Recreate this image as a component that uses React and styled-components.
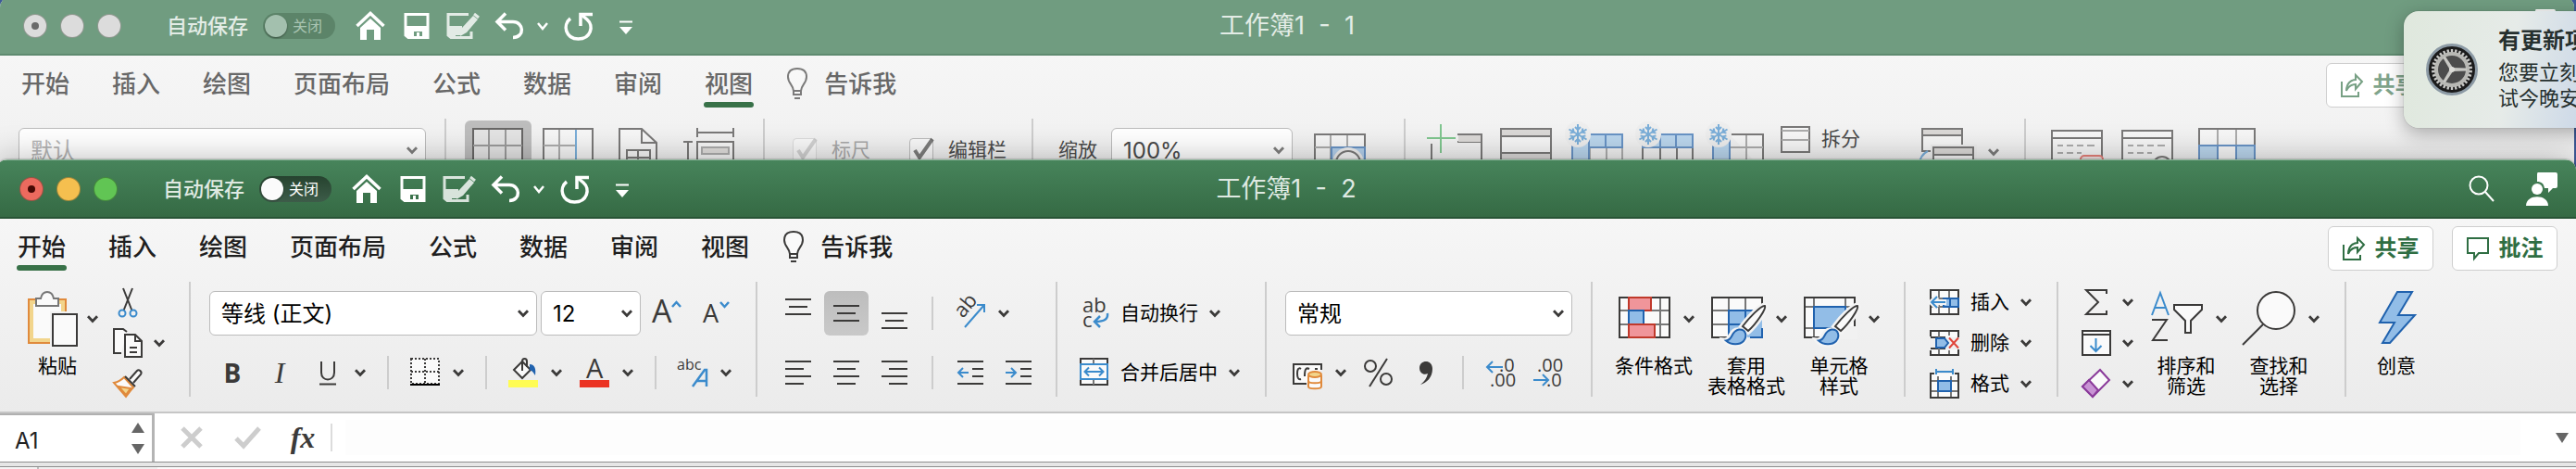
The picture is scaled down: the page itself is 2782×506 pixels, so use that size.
import React from "react";
import styled, { createGlobalStyle, css } from "styled-components";

const INK = "#3b3a39";
const GREEN = "#2f6e43";
const BLUE = "#3b8bcc";
const DEEP = "#2062ae";
const SKY = "#92bde7";

const GlobalStyle = createGlobalStyle`
  * { box-sizing: border-box; }
  html, body, #root { height: 100%; }
  body {
    margin: 0;
    overflow: hidden;
    font-family: "Inter", "Noto Sans CJK SC", sans-serif;
    color: #000;
  }
  button, input, select { font: inherit; color: inherit; }
`;

/* ---------- windows ---------- */

const Desktop = styled.div`
  position: relative;
  height: 100%;
  overflow: hidden;
  background: #3d5a98;
`;

const Window = styled.section`
  position: absolute;
  top: ${(p) => (p.$front ? "172px" : "-4px")};
  left: ${(p) => (p.$front ? "-4px" : "0")};
  right: ${(p) => (p.$front ? "0" : "2px")};
  bottom: 0;
  display: flex;
  flex-direction: column;
  overflow: hidden;
  border-radius: 12px 12px 0 0;
  background: linear-gradient(#f6f6f6 64px, #efefef 200px, #ebebeb 272px);
  ${(p) =>
    p.$front
      ? css`box-shadow: 0 0 2px rgba(0, 0, 0, 0.5), 0 0 36px rgba(0, 0, 0, 0.28);`
      : css`--dim: 0.65;`}
`;

const TitleBar = styled.header`
  display: grid;
  grid-template-columns: 1fr auto 1fr;
  align-items: center;
  height: 64px;
  flex: none;
  padding: 0 20px;
  border-top: 1px solid ${(p) => (p.$front ? "#8fb79c" : "#709c80")};
  border-bottom: 2px solid ${(p) => (p.$front ? "#285436" : "#5f8b70")};
  background: ${(p) => (p.$front ? "linear-gradient(#47845b, #356a44)" : "#709c80")};
  color: ${(p) => (p.$front ? "#dfe9e2" : "#e3ece6")};
`;

const TitleSide = styled.div`
  display: flex;
  align-items: center;
  justify-content: ${(p) => (p.$end ? "flex-end" : "flex-start")};
  gap: ${(p) => (p.$end ? "32px" : "18px")};
`;

const Title = styled.h1`
  margin: 0;
  font-size: 27px;
  font-weight: 400;
  line-height: 36px;
  white-space: pre;
`;

const Lights = styled.div`
  display: flex;
  gap: 14px;
  margin: 0 31px 0 5px;
`;

const Light = styled.button`
  display: grid;
  place-items: center;
  width: 26px;
  height: 26px;
  padding: 0;
  border: 1px solid rgba(30, 50, 30, 0.4);
  border-radius: 50%;
  background: ${(p) => p.$color};
  &::after {
    content: "";
    width: 8px;
    height: 8px;
    border-radius: 50%;
    background: ${(p) => p.$dot || "transparent"};
  }
`;

const AutoSave = styled.label`
  display: flex;
  align-items: center;
  gap: 16px;
  margin-right: 4px;
  font-size: 22px;
  font-weight: 500;
  line-height: 32px;
`;

const Track = styled.span`
  display: flex;
  align-items: center;
  gap: 6px;
  width: 78px;
  height: 28px;
  padding: 0 2px;
  border-radius: 14px;
  background: ${(p) => (p.$front ? "linear-gradient(#26432f, #3d5c49)" : "#5c8469")};
  color: ${(p) => (p.$front ? "#fff" : "#a9c4b2")};
  font-size: 16px;
  font-weight: 400;
`;

const Knob = styled.input`
  appearance: none;
  width: 24px;
  height: 24px;
  margin: 0;
  border-radius: 50%;
  background: ${(p) => (p.$front ? "#fbfbfb" : "#a3c0ae")};
  box-shadow: 0 1px 2px rgba(0, 0, 0, 0.4);
`;

const Plain = styled.button`
  display: flex;
  align-items: center;
  justify-content: center;
  gap: 14px;
  padding: 0;
  border: 0;
  background: none;
  white-space: nowrap;
`;

const Svg = styled.svg`
  display: block;
  flex: none;
  overflow: visible;
  fill: none;
  stroke: ${INK};
  stroke-width: 2;
  opacity: var(--dim, 1);
  text { stroke: none; fill: ${INK}; font-family: "Open Sans", "Noto Sans", sans-serif; }
`;

const TitleSvg = styled(Svg)`
  stroke: #fff;
  opacity: ${(p) => (p.$faded ? 0.8 : 1)};
`;

/* ---------- tabs ---------- */

const TabRow = styled.nav`
  display: flex;
  align-items: center;
  justify-content: space-between;
  flex: none;
  padding: 8px 20px 12px 22px;
`;

const Tabs = styled.div`
  display: flex;
  gap: 44px;
`;

const Tab = styled.button`
  display: flex;
  flex-direction: column;
  padding: 4px 0 0;
  border: 0;
  background: none;
  color: ${(p) => (p.$front ? "#1f1f1f" : "#686868")};
  font-size: 26px;
  font-weight: 500;
  line-height: 38px;
  white-space: nowrap;
  span { padding: 0 1px; }
  &::after {
    content: "";
    width: 100%;
    height: 6px;
    border-radius: 3px;
    background: ${(p) => (p.$active ? "#387148" : "transparent")};
  }
`;

const TellMe = styled(Tab)`
  flex-direction: row;
  gap: 16px;
  margin-left: -9px;
  &::after { content: none; }
`;

const Actions = styled.div`
  display: flex;
  gap: 20px;
`;

const Action = styled.button`
  display: flex;
  align-items: center;
  justify-content: center;
  gap: 11px;
  width: 114px;
  height: 48px;
  padding: 0;
  border: 1px solid #cfcfcf;
  border-radius: 6px;
  background: #fff;
  color: ${(p) => (p.$front ? GREEN : "#7fa48b")};
  font-size: 24px;
  font-weight: 700;
  line-height: 32px;
`;

/* ---------- ribbon ---------- */

const Ribbon = styled.div`
  display: flex;
  flex: none;
  height: 142px;
  border-bottom: 2px solid #c6c6c6;
`;

const Group = styled.div`
  display: flex;
  flex: none;
  gap: ${(p) => p.$gap || 0}px;
  padding: 0 ${(p) => p.$right}px 0 ${(p) => p.$left}px;
`;

const Divider = styled.div`
  flex: none;
  width: 2px;
  height: 124px;
  background: #cdcdcd;
`;

const MiniDivider = styled.div`
  width: 2px;
  height: 36px;
  margin: 0 ${(p) => p.$space}px;
  background: #cdcdcd;
`;

const TwoRows = styled.div`
  display: grid;
  grid-template-rows: 48px 36px;
  row-gap: 22px;
  align-content: start;
  padding-top: 10px;
`;

const ThreeRows = styled.div`
  display: flex;
  flex-direction: column;
  gap: 12px;
  padding-top: 6px;
`;

const Row = styled.div`
  display: flex;
  align-items: center;
  gap: ${(p) => p.$gap}px;
  padding-left: ${(p) => p.$left || 0}px;
`;

const Item = styled(Plain)`
  gap: ${(p) => p.$gap || 14}px;
  height: 32px;
  color: ${(p) => p.$ink || "inherit"};
  font-size: 21px;
  line-height: 32px;
`;

const AlignButton = styled(Plain)`
  width: 48px;
  height: ${(p) => (p.$short ? "36px" : "48px")};
  border-radius: 6px;
  background: ${(p) => (p.$active ? "linear-gradient(#bdbdbd, #c9c9c9)" : "none")};
`;

const Big = styled.button`
  display: flex;
  flex-direction: column;
  align-items: center;
  gap: 10px;
  width: 100px;
  padding: 10px 0 0;
  border: 0;
  background: none;
  font-size: 21px;
  line-height: 22px;
  white-space: pre;
`;

const BigIcon = styled.span`
  display: flex;
  align-items: center;
  gap: 10px;
`;

const BigLabel = styled.span`
  padding-right: ${(p) => (p.$split ? "6px" : "0")};
`;

const ViewButton = styled(Plain)`
  align-items: flex-start;
  width: 72px;
  height: 72px;
  margin-top: 2px;
  padding-top: 4px;
  border-radius: 6px;
  background: ${(p) => (p.$active ? "#bdbdbd" : "none")};
`;

const ViewMenuButton = styled(Plain)`
  height: 60px;
  margin: 6px 0 0 60px;
`;

const SelectBox = styled.div`
  position: relative;
  width: ${(p) => p.$width}px;
  height: 48px;
  select {
    appearance: none;
    width: 100%;
    height: 100%;
    padding: 0 12px;
    border: 1px solid #bcbcbc;
    border-radius: 6px;
    background: #fff;
    color: ${(p) => p.$ink || "#000"};
    font-size: 24px;
    opacity: 1;
  }
  svg {
    position: absolute;
    right: 9px;
    top: 20px;
    pointer-events: none;
  }
`;

const Label = styled.label`
  display: flex;
  align-items: center;
  gap: 16px;
  height: 48px;
  color: ${(p) => (p.$off ? "#a8a8a8" : "#4a4a4a")};
  font-size: 21px;
  line-height: 32px;
  white-space: nowrap;
`;

const Check = styled.span`
  position: relative;
  width: 26px;
  height: 26px;
  input {
    appearance: none;
    display: block;
    width: 26px;
    height: 26px;
    margin: 0;
    border: 1px solid ${(p) => (p.$off ? "#dcdcdc" : "#bdbdbd")};
    border-radius: 4px;
    background: #f8f8f8;
  }
  svg {
    position: absolute;
    left: 0;
    top: 0;
    pointer-events: none;
  }
`;

const Glyph = styled.span`
  width: 32px;
  color: ${INK};
  font-family: ${(p) => (p.$serif ? '"Liberation Serif", serif' : '"Open Sans", sans-serif')};
  font-size: ${(p) => (p.$serif ? "32px" : "28px")};
  font-weight: ${(p) => (p.$bold ? 700 : 400)};
  font-style: ${(p) => (p.$serif ? "italic" : "normal")};
  line-height: 32px;
  text-align: center;
`;

/* ---------- formula bar ---------- */

const FormulaBar = styled.div`
  display: flex;
  align-items: center;
  flex: none;
  height: 52px;
  background: #fff;
`;

const NameBox = styled.div`
  display: flex;
  align-items: center;
  align-self: stretch;
  width: 171px;
  padding: 0 8px 0 20px;
  border-top: 2px solid #b0b0b0;
  border-right: 3px solid #b4b4b4;
  margin-right: 24px;
  input {
    flex: 1;
    min-width: 0;
    padding: 6px 0 0;
    border: 0;
    background: none;
    color: #222;
    font-size: 24px;
    line-height: 32px;
  }
`;

const Stepper = styled.div`
  display: flex;
  flex-direction: column;
  gap: 12px;
`;

const FormulaTools = styled.div`
  display: flex;
  align-items: center;
  gap: 28px;
`;

const FormulaInput = styled.input`
  flex: 1;
  min-width: 0;
  height: 38px;
  border: 0;
  background: #fdfdfd;
  font-size: 24px;
`;

const FormulaDivider = styled.div`
  width: 2px;
  height: 30px;
  margin: 0 14px;
  background: #dcdcdc;
`;

const Expand = styled(Plain)`
  width: 60px;
  justify-content: flex-end;
  padding-right: 8px;
`;

const Sash = styled.div`
  flex: none;
  height: 6px;
  border-top: 1px solid #8f8f8f;
  border-bottom: 1px solid #8f8f8f;
  background: #e6e6e6;
`;

const Sheet = styled.div`
  flex: 1;
  background: linear-gradient(90deg, #f4f4f4 44px, #bdbdbd 44px 46px, #efefef 46px 174px, #fafafa 174px);
`;

/* ---------- notification ---------- */

const Notice = styled.aside`
  position: absolute;
  top: 12px;
  right: -40px;
  display: flex;
  align-items: center;
  gap: 22px;
  width: 226px;
  height: 126px;
  padding-left: 24px;
  border-radius: 16px;
  background: linear-gradient(100deg, #dfe8dd 0%, #e6ebe8 50%, #cdd9e8 85%);
  box-shadow: 0 0 1px rgba(0, 0, 0, 0.5), 0 6px 20px rgba(0, 0, 0, 0.3);
  color: #26302f;
  white-space: nowrap;
`;

const NoticeText = styled.div`
  padding-bottom: 2px;
  font-size: 22px;
  line-height: 28px;
  p { margin: 0; }
  h2 {
    margin: 0 0 5px;
    font-size: 24px;
    font-weight: 700;
    line-height: 30px;
  }
`;

/* ---------- drawings ---------- */

const Ico = ({ w = 32, h = 32, children }) => (
  <Svg width={w} height={h} viewBox={`0 0 ${w} ${h}`} aria-hidden="true">{children}</Svg>
);

const Caret = () => (
  <Svg width="12" height="8" viewBox="0 0 12 8" aria-hidden="true">
    <path d="M1 1.2 6 6.4 11 1.2" strokeWidth="2.8" />
  </Svg>
);

const Lines = ({ rows }) => (
  <Ico>
    {rows.map(([x1, x2, y]) => <path key={y} d={`M${x1} ${y}H${x2}`} />)}
  </Ico>
);

const brush = (
  <>
    <path d="M58 16C60 19 48 36 40 43L34 38C40 30 54 15 58 16Z" stroke="#f4f4f4" strokeWidth="7" />
    <path d="M14 53C22 54 20 40 31 42C40 45 38 56 28 58C21 59 17 57 14 53Z" stroke="#f4f4f4" strokeWidth="5" />
    <path d="M58 16C60 19 48 36 40 43L34 38C40 30 54 15 58 16Z" fill="#fafafa" />
    <path d="M16 53.5C24 53 21 43 30 41.500C38 41 39 49 35 54C31 58 22 59 16 53.500Z" fill={SKY} stroke={DEEP} />
  </>
);

const icons = {
  paste: (
    <Ico w={60} h={60}>
      <rect x="7" y="9" width="40" height="47" fill="#fafafa" stroke="#e08a3c" />
      <rect x="10" y="12" width="34" height="41" stroke="#f2d58c" strokeWidth="4" />
      <path d="M15 16V8H20C21 3 24 1 27 1S33 3 34 8H39V16Z" fill="#fafafa" stroke="#777" />
      <rect x="30" y="22" width="32" height="40" fill="#f2f2f2" stroke="none" />
      <rect x="33" y="25" width="26" height="34" fill="#fafafa" />
    </Ico>
  ),
  cut: (
    <Ico>
      <path d="M11 1 20.500 25M21 1 11.500 25" />
      <circle cx="10" cy="28" r="3.500" stroke={BLUE} /><circle cx="22" cy="28" r="3.500" stroke={BLUE} />
    </Ico>
  ),
  copy: (
    <Ico>
      <path d="M9 27H1V1H11L15 4" fill="#fafafa" />
      <path d="M13 7H24L31 14V31H13Z" fill="#fafafa" /><path d="M24 7V14H31M18 21H26M18 26H26" />
    </Ico>
  ),
  brush: (
    <Ico>
      <path d="M1 15C6 14 9 12 12 9L22 20C19 23 17 26 14 30Z" fill="#fafafa" stroke="#e08a3c" />
      <path d="M6 19 19 21 14 28Z" fill="#f2d58c" stroke="#e08a3c" />
      <path d="M13 8 24 19M18 11 26 2C28 0 32 3 30 6L22 15" fill="#fafafa" />
    </Ico>
  ),
  grow: (
    <Ico>
      <text x="-2" y="26" fontSize="34">A</text>
      <path d="M20 9 24.500 4 29 9" stroke={BLUE} strokeWidth="2.500" />
    </Ico>
  ),
  shrink: (
    <Ico>
      <text x="1" y="26" fontSize="27">A</text>
      <path d="M20 4 24.500 9 29 4" stroke={BLUE} strokeWidth="2.500" />
    </Ico>
  ),
  border: (
    <Ico>
      <path d="M1 1H31V28H1ZM1 15H31M16 1V28" strokeDasharray="2 2" fill="#fafafa" />
      <path d="M0 29H32" stroke="#000" />
    </Ico>
  ),
  fill: (
    <Ico>
      <path d="M6 13 15 4 24 13 15 22Z" fill="#fafafa" />
      <path d="M15 14V4C15 0 20 0 20 4V10" />
      <path d="M23 7C29 7 30 13 29 19C27 16 26 14 23 13Z" fill={DEEP} stroke="none" />
      <rect y="24" width="32" height="8" fill="#fffc54" stroke="none" />
    </Ico>
  ),
  color: (
    <Ico>
      <text x="7" y="22" fontSize="29">A</text>
      <rect y="24" width="32" height="8" fill="#eb3323" stroke="none" />
    </Ico>
  ),
  phonetic: (
    <Ico>
      <text x="-1" y="13" fontSize="16">abc</text>
      <path d="M16 31 29 13H31V31M20 25H31" stroke={BLUE} strokeWidth="2.500" />
    </Ico>
  ),
  orient: (
    <Ico>
      <text x="0" y="0" fontSize="22" transform="translate(8 22) rotate(-50)">ab</text>
      <path d="M10 31 31 7M23 7H31V15" stroke={BLUE} />
    </Ico>
  ),
  outdent: (
    <Ico>
      <path d="M2 4H30M18 12H30M18 20H30M2 28H30" />
      <path d="M14 16H3M8 11 3 16 8 21" stroke={BLUE} />
    </Ico>
  ),
  indent: (
    <Ico>
      <path d="M2 4H30M18 12H30M18 20H30M2 28H30" />
      <path d="M2 16H13M8 11 13 16 8 21" stroke={BLUE} />
    </Ico>
  ),
  wrap: (
    <Ico>
      <text x="3" y="15" fontSize="22">ab</text>
      <text x="3" y="31" fontSize="22">c</text>
      <path d="M30 16C31 22 27 25 17 25M22 19 16 25 22 31" stroke={BLUE} strokeWidth="2.500" />
    </Ico>
  ),
  merge: (
    <Ico>
      <rect x="1" y="1" width="29" height="28" fill="#fafafa" /><path d="M15 1V7M15 23V29" stroke="#777" />
      <rect x="1" y="7" width="29" height="16" fill="#fafafa" stroke={BLUE} />
      <path d="M6 15H25M10 10.500 5.500 15 10 19.500M21 10.500 25.500 15 21 19.500" stroke={BLUE} />
    </Ico>
  ),
  currency: (
    <Ico>
      <path d="M31 13V7H1V28H15" fill="#fafafa" />
      <path d="M9 12C6 10 5 13 5 17S6 24 9 23M18 12C14 10 13 13 13 20M24 12H27" />
      <path d="M17 19V31C17 34 31 34 31 31V19" fill="#fafafa" stroke="#e08a3c" />
      <ellipse cx="24" cy="18" rx="7" ry="3" fill="#f2d58c" stroke="#e08a3c" />
      <path d="M17 25C17 28 31 28 31 25" stroke="#e08a3c" />
    </Ico>
  ),
  percent: (
    <Ico>
      <circle cx="7" cy="9" r="6" /><circle cx="24" cy="23" r="6" /><path d="M25 1 6 31" />
    </Ico>
  ),
  comma: (
    <Ico>
      <path d="M10 29C17 27 23 21 23 12C23 1 9 2 9 11C9 17 14 19 18 17C17 22 14 26 10 29Z" fill={INK} stroke="none" />
    </Ico>
  ),
  moreDec: (
    <Ico>
      <text x="15" y="15" fontSize="20">.0</text><text x="5" y="31" fontSize="20">.00</text>
      <path d="M19 10H2M8 4 2 10 8 16" stroke={BLUE} />
    </Ico>
  ),
  lessDec: (
    <Ico>
      <text x="5" y="15" fontSize="20">.00</text><text x="15" y="31" fontSize="20">.0</text>
      <path d="M1 24H16M11 18 17 24 11 30" stroke={BLUE} />
    </Ico>
  ),
  conditional: (
    <Ico w={60} h={60}>
      <rect x="1" y="7" width="54" height="43" fill="#fafafa" />
      <path d="M2 21H54M2 36H54M45 8V49" stroke="#777" />
      <rect x="11" y="7" width="24" height="14" fill="#f0959a" stroke="#c0392b" />
      <rect x="11" y="21" width="16" height="15" fill={SKY} stroke={DEEP} />
      <rect x="11" y="36" width="28" height="14" fill="#f0959a" stroke="#c0392b" />
    </Ico>
  ),
  tableFormat: (
    <Ico w={60} h={60}>
      <path d="M1 7H55V50H1Z" fill="#fafafa" stroke="none" />
      <path d="M19 21H55V50H19Z" fill={SKY} stroke="none" />
      <path d="M55 20V7H1V50H19" /><path d="M19 8V21M37 8V21M2 21H19M2 36H19" stroke="#777" />
      <path d="M55 40V50H42M48 21H19V50M37 21V30M19 36H34" stroke={DEEP} />
      {brush}
    </Ico>
  ),
  cellStyle: (
    <Ico w={60} h={60}>
      <path d="M1 7H55V50H1Z" fill="#fafafa" />
      <path d="M11 8V49M45 8V49M2 17H54M2 40H54" stroke="#777" />
      <rect x="11" y="17" width="34" height="23" fill={SKY} stroke={DEEP} />
      <rect x="39" y="38" width="19" height="14" fill="#f1f1f1" stroke="none" />
      {brush}
    </Ico>
  ),
  insertCells: (
    <Ico>
      <rect x="1" y="3" width="30" height="26" fill="#fafafa" />
      <path d="M10 4V28M21 4V28M2 12H30M2 21H30" stroke="#777" />
      <path d="M15 12H31V21H15Z" fill={SKY} stroke={DEEP} /><path d="M22 12V21" stroke={DEEP} />
      <path d="M18 16H2M8 10 2 16 8 22" stroke="#f4f4f4" strokeWidth="6" />
      <path d="M17 16H2M8 10 2 16 8 22" stroke={BLUE} />
    </Ico>
  ),
  deleteCells: (
    <Ico>
      <path d="M1 9V3H31V10M1 24V29H31V23M1 10H17M1 22H17" fill="#fafafa" />
      <path d="M10 4V10M21 4V8M10 22V28M21 24V28" stroke="#777" />
      <path d="M7 11H16L20 16 16 21H7Z" fill={SKY} stroke={DEEP} />
      <path d="M21 10.500 31 21.500M31 10.500 21 21.500" stroke="#e0453a" />
    </Ico>
  ),
  formatCells: (
    <Ico>
      <path d="M5 5H1V31H31V5H27" fill="#fafafa" />
      <path d="M9 8V30M23 8V30M2 13H30M2 24H30" stroke="#777" />
      <rect x="9" y="13" width="14" height="11" fill={SKY} stroke={DEEP} />
      <path d="M7 3H25M7 0V6M25 0V6" stroke={BLUE} />
    </Ico>
  ),
  sum: (<Ico><path d="M27 7V3H5L18 16 5 29H27V25" /></Ico>),
  fillDown: (
    <Ico>
      <path d="M1 3H31V29H1ZM1 7H31" fill="#fafafa" />
      <path d="M15.500 11V25M9.500 19 15.500 25 21.500 19" stroke={BLUE} />
    </Ico>
  ),
  eraser: (
    <Ico>
      <path d="M20 1 30 12 12 30 1 19Z" fill="#fafafa" stroke="#8a3a9a" />
      <path d="M8 12 18 23 12 30 1 19Z" fill="#c893d4" stroke="#8a3a9a" />
    </Ico>
  ),
  sortFilter: (
    <Ico w={60} h={60}>
      <path d="M1 26 10 2 19 26M4 18H16" stroke={BLUE} />
      <path d="M1 31H17L2 53H18" />
      <path d="M25 15H55V20L43 32V45H37V32L25 20Z" fill="#fafafa" />
    </Ico>
  ),
  find: (
    <Ico w={60} h={60}>
      <circle cx="35" cy="21" r="20" fill="#fafafa" /><path d="M21 36-1 58" />
    </Ico>
  ),
  ideas: (
    <Ico w={60} h={60}>
      <path d="M31 1H47L32 26H50L23 56H15L28 34H12Z" fill={SKY} stroke={DEEP} />
    </Ico>
  ),
};

const gridIcon = (
  <>
    <rect x="3" y="5" width="53" height="44" fill="#fafafa" />
    <path d="M20 6V49M38 6V49M3 23H56M3 41H56" stroke="#888" />
  </>
);

const flake = (
  <>
    <circle cx="11" cy="11" r="14" fill="#ececec" stroke="none" />
    {[0, 60, 120, 180, 240, 300].map((a) => (
      <path key={a} d="M11 11V0M8 3 11 6 14 3" stroke={BLUE} transform={`rotate(${a} 11 11)`} />
    ))}
  </>
);

const viewIcons = {
  normal: <Ico w={60} h={60}>{gridIcon}</Ico>,
  pageBreak: (
    <Ico w={60} h={60}>
      <rect x="3" y="5" width="53" height="44" fill="#fafafa" />
      <path d="M20 6V49M3 23H37M3 41H37" stroke="#888" /><path d="M38 6V49" stroke={BLUE} />
    </Ico>
  ),
  pageLayout: (
    <Ico w={60} h={60}>
      <path d="M9 49V5H33L49 20V49" fill="#fafafa" /><path d="M33 5V20H49M17 49V28H42V49M29 28V49M17 36H42" />
    </Ico>
  ),
  ruler: (
    <Ico w={60} h={60}>
      <path d="M17 4V14M56 4V14M17 9H56M2 19H12M7 19V49" /><rect x="17" y="19" width="39" height="32" fill="#fafafa" />
      <rect x="22" y="25" width="29" height="7" fill="#d8d5d2" stroke="#888" />
    </Ico>
  ),
  zoomTo: (
    <Ico w={60} h={60}>
      <rect x="3" y="11" width="54" height="38" fill="#fafafa" /><path d="M20 12V49M38 12V26M3 25H57" stroke="#888" />
      <rect x="21" y="25" width="36" height="26" fill={SKY} stroke={DEEP} />
      <circle cx="39" cy="42" r="17" fill="#ececec" stroke="none" /><circle cx="39" cy="42" r="13" fill="#fafafa" />
    </Ico>
  ),
  newPane: (
    <Ico w={60} h={60}>
      <path d="M5 21V58M33 11H59V58M33 19H59" /><rect x="34" y="12" width="24" height="7" fill="#d0cdca" stroke="none" />
      <path d="M15 0V31M0 15H31" stroke="#f4f4f4" strokeWidth="6" />
      <path d="M15 0V31M0 15H31" stroke="#44b05c" />
    </Ico>
  ),
  arrange: (
    <Ico w={60} h={60}>
      <rect x="4" y="5" width="54" height="8" fill="#cfccca" /><rect x="4" y="13" width="54" height="18" fill="#fafafa" />
      <rect x="4" y="31" width="54" height="12" fill="#cfccca" />
    </Ico>
  ),
  freeze: (
    <Ico w={60} h={60}>
      <path d="M24 25V50M42 25V50M59 25V50" fill="none" stroke="#888" />
      <path d="M5 24V11H59V25H23V50H5Z" fill="#9ec8ec" stroke={DEEP} /><path d="M41 11V25M23 11V25" stroke={DEEP} />{flake}
    </Ico>
  ),
  freezeRow: (
    <Ico w={60} h={60}>
      <path d="M5 25V50M24 25V50M42 25V50M59 25V50" />
      <path d="M5 11H59V25H5Z" fill="#9ec8ec" stroke={DEEP} /><path d="M24 11V25M41 11V25" stroke={DEEP} />{flake}
    </Ico>
  ),
  freezeCol: (
    <Ico w={60} h={60}>
      <path d="M23 11H59V50" fill="#fafafa" /><path d="M41 12V50M23 25H59" stroke="#888" />
      <path d="M5 11H23V50H5Z" fill="#9ec8ec" stroke={DEEP} />{flake}
    </Ico>
  ),
  split: (
    <Ico>
      <path d="M1 3H31V30H1Z" fill="#fafafa" /><path d="M1 7H31M1 17H31" stroke="#888" />
    </Ico>
  ),
  switchWin: (
    <Ico w={60} h={60}>
      <rect x="3" y="5" width="43" height="24" fill="#fafafa" /><path d="M3 5H46V12H3Z" fill="#d0cdca" />
      <path d="M9 29C3 32 0 38 0 44" stroke={BLUE} /><rect x="12" y="22" width="50" height="30" fill="#ececec" stroke="none" />
      <path d="M15 50V25H58V50M15 33H58" fill="#fafafa" /><rect x="16" y="26" width="41" height="6" fill="#d0cdca" stroke="none" />
    </Ico>
  ),
  macroRec: (
    <Ico w={60} h={60}>
      <path d="M3 50V7H57V36M3 15H57" fill="#fafafa" /><path d="M9 23H15M19 23H26M30 23H37M41 23H49M9 31H15M19 31H26M30 31H35" stroke="#888" />
      <rect x="34" y="34" width="24" height="20" rx="4" fill="#f6e0de" stroke="#e0453a" />
    </Ico>
  ),
  macroView: (
    <Ico w={60} h={60}>
      <path d="M3 50V7H57V38M3 15H57" fill="#fafafa" /><path d="M9 23H15M19 23H26M30 23H37M41 23H49M9 31H15M19 31H26M30 31H35" stroke="#888" />
      <circle cx="46" cy="45" r="10" />
    </Ico>
  ),
  table: (
    <Ico w={60} h={60}>
      <path d="M10 50V5H70V50" fill="#fafafa" /><path d="M30 6V50M50 6V50" stroke="#888" />
      <path d="M10 50V23H30V50M50 50V23H70V50M30 23H50" fill="#9ec8ec" stroke={DEEP} />
    </Ico>
  ),
};

const titleIcons = (
  <>
    <Plain aria-label="主页">
      <TitleSvg width="32" height="32" viewBox="0 0 32 32">
        <path d="M1.500 16 16 2.500 30.500 16" strokeWidth="3.500" />
        <path d="M5 18 16 8 27 18V31H20V20H12V31H5Z" fill="#fff" stroke="none" />
      </TitleSvg>
    </Plain>
    <Plain aria-label="保存">
      <TitleSvg width="32" height="32" viewBox="0 0 32 32">
        <path d="M4 3.500H28V28.500H7L4 26Z" strokeWidth="3" />
        <path d="M5 16H27V29H22V22H13V29H5Z" fill="#fff" stroke="none" /><path d="M16 23H19V28H16Z" fill="#fff" stroke="none" />
      </TitleSvg>
    </Plain>
    <Plain aria-label="另存为">
      <TitleSvg $faded width="32" height="32" viewBox="0 0 32 32">
        <path d="M22 3.500H0V26L3 28.500H25V22" strokeWidth="3" />
        <path d="M1 16H15V26H8V29H1Z" fill="#fff" stroke="none" />
        <path d="M13 27 15 18 27 5 32 9 20 23Z" fill="#fff" stroke="none" /><path d="M28 3 33 7" strokeWidth="3" />
      </TitleSvg>
    </Plain>
    <Item as="div">
      <Plain aria-label="撤消">
        <TitleSvg width="32" height="32" viewBox="0 0 32 32">
          <path d="M12 2.500 3 11.500 12 20.500M4 11.500H20C32 11.500 33 28.500 20 28.500" strokeWidth="3.500" />
        </TitleSvg>
      </Plain>
      <Plain aria-label="撤消选项">
        <TitleSvg width="12" height="8" viewBox="0 0 12 8"><path d="M1 1 6 7 11 1" strokeWidth="2.500" /></TitleSvg>
      </Plain>
    </Item>
    <Plain aria-label="恢复">
      <TitleSvg width="32" height="32" viewBox="0 0 32 32">
        <path d="M6 8C-3 15 1 30 14.500 30C28 30 32 16 24 9L18 4" strokeWidth="3.500" /><path d="M17 16V3.500H30" strokeWidth="3.500" />
      </TitleSvg>
    </Plain>
    <Plain aria-label="自定义快速访问工具栏">
      <TitleSvg width="32" height="32" viewBox="0 0 32 32">
        <path d="M9 11.500H23" /><path d="M9 17H23L16 25Z" fill="#fff" stroke="none" />
      </TitleSvg>
    </Plain>
  </>
);

/* ---------- composed parts ---------- */

const Split = ({ icon, name, text, gap }) => (
  <Item aria-label={text ? undefined : name} $gap={gap}>
    {icons[icon]}
    {text && <span>{text}</span>}
    <Caret />
  </Item>
);

const Tool = ({ icon, name }) => <Item aria-label={name}>{icons[icon]}</Item>;

const BigButton = ({ icon, text, plain }) => (
  <Big>
    <BigIcon>{icons[icon]}{!plain && <Caret />}</BigIcon>
    <BigLabel $split={!plain}>{text}</BigLabel>
  </Big>
);

const View = ({ icon, name, active }) => (
  <ViewButton aria-label={name} $active={active}>{viewIcons[icon]}</ViewButton>
);

const Combo = ({ width, value, name, id, ink, disabled }) => (
  <SelectBox $width={width} $ink={ink}>
    <select id={id} aria-label={name} disabled={disabled} defaultValue={value}><option>{value}</option></select>
    <Caret />
  </SelectBox>
);

const CheckItem = ({ text, off }) => (
  <Label $off={off}>
    <Check $off={off}>
      <input type="checkbox" defaultChecked disabled={off} />
      <Svg width="26" height="26" viewBox="0 0 26 26"><path d="M6 13 11 21 25 1" strokeWidth="4" stroke={off ? "#bbb" : INK} /></Svg>
    </Check>
    {text}
  </Label>
);

const TABS = ["开始", "插入", "绘图", "页面布局", "公式", "数据", "审阅", "视图"];

const Chrome = ({ front, title, active }) => (
  <>
    <TitleBar $front={front}>
      <TitleSide>
        <Lights>
          <Light aria-label="关闭窗口" $color={front ? "#ec6a5e" : "#dcdcdc"} $dot={front ? "#460804" : "#6a6a6a"} />
          <Light aria-label="最小化" $color={front ? "#f5bf4f" : "#dcdcdc"} />
          <Light aria-label="缩放窗口" $color={front ? "#61c554" : "#dcdcdc"} />
        </Lights>
        <AutoSave>
          自动保存
          <Track $front={front}><Knob $front={front} type="checkbox" role="switch" />关闭</Track>
        </AutoSave>
        {titleIcons}
      </TitleSide>
      <Title>{title}</Title>
      <TitleSide $end>
        <Plain aria-label="搜索">
          <TitleSvg width="32" height="32" viewBox="0 0 32 32"><circle cx="13" cy="12" r="9.500" /><path d="M20 19 29 29" /></TitleSvg>
        </Plain>
        <Plain aria-label="账户">
          <TitleSvg width="34" height="38" viewBox="0 0 34 38">
            <path d="M13 1H32Q34 1 34 3V16Q34 18 32 18H29L24 23V18H20C19 13 17 11 12 11V3Q12 1 13 1Z" fill="#fff" stroke="none" />
            <circle cx="12" cy="19" r="6" fill="#fff" stroke="none" /><path d="M0 37C0 24 24 24 24 37Z" fill="#fff" stroke="none" />
          </TitleSvg>
        </Plain>
      </TitleSide>
    </TitleBar>
    <TabRow>
      <Tabs>
        {TABS.map((t) => <Tab key={t} $front={front} $active={t === active}><span>{t}</span></Tab>)}
        <TellMe $front={front}>
          <Svg width="24" height="36" viewBox="0 0 24 36">
            <path d="M8 26C8 20 2 18 2 11C2 5 6 2 12 2S22 5 22 11C22 18 16 20 16 26V30H8ZM8 26H16" fill="#fafafa" />
            <path d="M9 34H15" />
          </Svg>
          <span>告诉我</span>
        </TellMe>
      </Tabs>
      <Actions>
        <Action $front={front}>
          <Svg width="24" height="26" viewBox="0 0 24 26"><g stroke={GREEN}><path d="M1 9V25H19V20" /><path d="M6 19C6 11 11 7 16 7V2L23 9 16 17V12C12 12 8 14 6 19Z" /></g></Svg>
          共享
        </Action>
        <Action $front={front}>
          <Svg width="24" height="26" viewBox="0 0 24 26"><path d="M1 2H23V18H13L8 24V18H1Z" stroke={GREEN} /></Svg>
          批注
        </Action>
      </Actions>
    </TabRow>
  </>
);

const ViewRibbon = () => (
  <Ribbon>
    <Group $left={20} $right={20}>
      <TwoRows><Combo width={440} value="默认" name="工作表视图" ink="#b4b4b4" disabled /></TwoRows>
    </Group>
    <Divider />
    <Group $left={20} $right={22} $gap={4}>
      <View icon="normal" name="普通" active />
      <View icon="pageBreak" name="分页预览" />
      <View icon="pageLayout" name="页面布局视图" />
      <View icon="ruler" name="自定义视图" />
    </Group>
    <Divider />
    <Group $left={30} $right={27}>
      <TwoRows>
        <Row $gap={42}><CheckItem text="标尺" off /><CheckItem text="编辑栏" /></Row>
      </TwoRows>
    </Group>
    <Divider />
    <Group $left={27} $right={33} $gap={15}>
      <TwoRows>
        <Row $gap={15}>
          <Label htmlFor="zoom">缩放</Label>
          <Combo width={196} value="100%" id="zoom" ink="#4a4a4a" />
        </Row>
      </TwoRows>
      <View icon="zoomTo" name="缩放到选定区域" />
    </Group>
    <Divider />
    <Group $left={17} $right={27} $gap={4}>
      <View icon="newPane" name="新建窗口" />
      <View icon="arrange" name="全部重排" />
      <View icon="freeze" name="冻结窗格" />
      <View icon="freezeRow" name="冻结首行" />
      <View icon="freezeCol" name="冻结首列" />
      <ThreeRows>
        <Row $left={8}>
          <Item $gap={12} $ink="#4a4a4a">{viewIcons.split}<span>拆分</span></Item>
        </Row>
      </ThreeRows>
      <ViewMenuButton aria-label="切换窗口">
        {viewIcons.switchWin}
        <Caret />
      </ViewMenuButton>
    </Group>
    <Divider />
    <Group $left={19} $right={20} $gap={4}>
      <View icon="macroRec" name="录制宏" />
      <View icon="macroView" name="查看宏" />
      <View icon="table" name="宏" />
    </Group>
  </Ribbon>
);

const HomeRibbon = () => (
  <Ribbon>
    <Group $left={19} $right={26} $gap={7}>
      <BigButton icon="paste" text="粘贴" />
      <ThreeRows>
        <Row><Tool icon="cut" name="剪切" /></Row>
        <Row><Split icon="copy" name="复制" gap={12} /></Row>
        <Row><Tool icon="brush" name="格式刷" /></Row>
      </ThreeRows>
    </Group>
    <Divider />
    <Group $left={20} $right={26}>
      <TwoRows>
        <Row $gap={4}>
          <Combo width={354} value="等线 (正文)" name="字体" />
          <Combo width={108} value="12" name="字号" />
          <Row $gap={20} $left={10}>
            <Tool icon="grow" name="增大字号" />
            <Tool icon="shrink" name="减小字号" />
          </Row>
        </Row>
        <Row $gap={19} $left={9}>
          <Item aria-label="加粗"><Glyph $bold>B</Glyph></Item>
          <Item aria-label="倾斜"><Glyph $serif>I</Glyph></Item>
          <Item aria-label="下划线">
            <Ico><path d="M10 4V16C10 26 24 26 24 16V4M8 28.500H26" /></Ico>
            <Caret />
          </Item>
          <MiniDivider $space={4} />
          <Split icon="border" name="边框" />
          <MiniDivider $space={4} />
          <Split icon="fill" name="填充颜色" />
          <Split icon="color" name="字体颜色" />
          <MiniDivider $space={4} />
          <Split icon="phonetic" name="拼音指南" />
        </Row>
      </TwoRows>
    </Group>
    <Divider />
    <Group $left={20} $right={16}>
      <TwoRows>
        <Row $gap={4}>
          <AlignButton aria-label="顶端对齐"><Lines rows={[[2, 30, 1], [6, 26, 9], [2, 30, 17]]} /></AlignButton>
          <AlignButton aria-label="垂直居中" $active><Lines rows={[[2, 30, 8], [6, 26, 16], [2, 30, 24]]} /></AlignButton>
          <AlignButton aria-label="底端对齐"><Lines rows={[[2, 30, 16], [6, 26, 24], [2, 30, 32]]} /></AlignButton>
          <MiniDivider $space={12} />
          <Row $left={8}><Split icon="orient" name="方向" /></Row>
        </Row>
        <Row $gap={4}>
          <AlignButton $short aria-label="左对齐"><Lines rows={[[2, 30, 4], [2, 22, 12], [2, 30, 20], [2, 22, 28]]} /></AlignButton>
          <AlignButton $short aria-label="居中"><Lines rows={[[2, 30, 4], [6, 26, 12], [2, 30, 20], [6, 26, 28]]} /></AlignButton>
          <AlignButton $short aria-label="右对齐"><Lines rows={[[2, 30, 4], [10, 30, 12], [2, 30, 20], [10, 30, 28]]} /></AlignButton>
          <MiniDivider $space={12} />
          <AlignButton $short aria-label="减少缩进量">{icons.outdent}</AlignButton>
          <AlignButton $short aria-label="增加缩进量">{icons.indent}</AlignButton>
        </Row>
      </TwoRows>
    </Group>
    <Divider />
    <Group $left={24} $right={27}>
      <TwoRows>
        <Row><Split icon="wrap" text="自动换行" gap={12} /></Row>
        <Row><Split icon="merge" text="合并后居中" gap={12} /></Row>
      </TwoRows>
    </Group>
    <Divider />
    <Group $left={20} $right={20}>
      <TwoRows>
        <Combo width={310} value="常规" name="数字格式" />
        <Row $gap={19} $left={8}>
          <Split icon="currency" name="会计数字格式" />
          <Tool icon="percent" name="百分比样式" />
          <Tool icon="comma" name="千位分隔样式" />
          <MiniDivider $space={4} />
          <Tool icon="moreDec" name="增加小数位数" />
          <Tool icon="lessDec" name="减少小数位数" />
        </Row>
      </TwoRows>
    </Group>
    <Divider />
    <Group $left={19} $right={17}>
      <BigButton icon="conditional" text="条件格式" />
      <BigButton icon="tableFormat" text={"套用\n表格格式"} />
      <BigButton icon="cellStyle" text={"单元格\n样式"} />
    </Group>
    <Divider />
    <Group $left={26} $right={27}>
      <ThreeRows>
        <Split icon="insertCells" text="插入" gap={12} />
        <Split icon="deleteCells" text="删除" gap={12} />
        <Split icon="formatCells" text="格式" gap={12} />
      </ThreeRows>
    </Group>
    <Divider />
    <Group $left={25} $right={18}>
      <Group $left={0} $right={10}>
        <ThreeRows>
          <Split icon="sum" name="自动求和" gap={12} />
          <Split icon="fillDown" name="填充" gap={12} />
          <Split icon="eraser" name="清除" gap={12} />
        </ThreeRows>
      </Group>
      <BigButton icon="sortFilter" text={"排序和\n筛选"} />
      <BigButton icon="find" text={"查找和\n选择"} />
    </Group>
    <Divider />
    <Group $left={4} $right={20}>
      <BigButton icon="ideas" text="创意" plain />
    </Group>
  </Ribbon>
);

const Triangle = ({ up }) => (
  <Svg width="14" height="11" viewBox="0 0 14 11"><path d={up ? "M0 11 7 0 14 11Z" : "M0 0H14L7 11Z"} fill="#666" stroke="none" /></Svg>
);

const teeth = Array.from({ length: 30 }, (_, i) => i * 12);

const Gear = () => (
  <svg width="56" height="56" viewBox="0 0 56 56" aria-hidden="true">
    <circle cx="28" cy="28" r="26.500" fill="#1b1b1b" stroke="#8c9aa5" strokeWidth="3" />
    {teeth.map((a) => <rect key={a} x="26.800" y="6" width="2.400" height="6" fill="#c8c8c6" transform={`rotate(${a} 28 28)`} />)}
    <circle cx="28" cy="28" r="17" fill="#4c4c4c" stroke="#b8b8b4" strokeWidth="4" />
    {[90, 212, 328].map((a) => <path key={a} d="M26 28 26.500 12H29.500L30 28Z" fill="#c8c8c4" transform={`rotate(${a} 28 28)`} />)}
    <circle cx="28" cy="28" r="3" fill="#dcdcd8" />
  </svg>
);

export default function App() {
  return (
    <Desktop>
      <GlobalStyle />
      <Window>
        <Chrome title="工作簿1  -  1" active="视图" />
        <ViewRibbon />
      </Window>
      <Window $front>
        <Chrome front title="工作簿1  -  2" active="开始" />
        <HomeRibbon />
        <FormulaBar>
          <NameBox>
            <input aria-label="名称框" defaultValue="A1" />
            <Stepper>
              <Plain aria-label="上一个"><Triangle up /></Plain>
              <Plain aria-label="下一个"><Triangle /></Plain>
            </Stepper>
          </NameBox>
          <FormulaTools>
            <Item aria-label="取消"><Ico><path d="M6 6 26 26M26 6 6 26" stroke="#cdcdcd" strokeWidth="5" /></Ico></Item>
            <Item aria-label="输入"><Ico><path d="M4 17 12 25 29 6" stroke="#cdcdcd" strokeWidth="5" /></Ico></Item>
            <Item aria-label="插入函数"><Glyph $serif $bold>fx</Glyph></Item>
          </FormulaTools>
          <FormulaDivider />
          <FormulaInput aria-label="编辑栏" />
          <Expand aria-label="展开编辑栏"><Triangle /></Expand>
        </FormulaBar>
        <Sash />
        <Sheet />
      </Window>
      <Notice>
        <Gear />
        <NoticeText>
          <h2>有更新项</h2>
          <p>您要立刻</p>
          <p>试今晚安</p>
        </NoticeText>
      </Notice>
    </Desktop>
  );
}
